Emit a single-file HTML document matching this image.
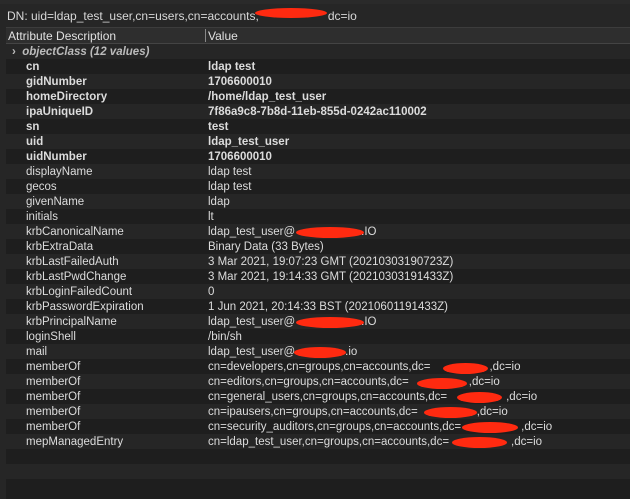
<!DOCTYPE html>
<html><head><style>
body{margin:0;width:630px;height:499px;background:#1e1e1e;font-family:"Liberation Sans",sans-serif;font-size:11.5px;color:#dcdcdc;position:relative;overflow:hidden}
.top{position:absolute;left:0;top:0;width:630px;height:4px;background:#2a2a2a}
.dn{position:absolute;left:0;top:4px;width:630px;height:23px;background:#262626;border-bottom:1px solid #3c3c3c}
.dn>span{position:absolute;left:7px;top:5px;font-size:12px;color:#d8d8d8;white-space:nowrap}
.hdr{position:absolute;left:6px;top:28px;width:624px;height:15px;background:#2e2e2e;border-bottom:1px solid #444}
.hdr span{position:absolute;top:1px;font-size:12px;color:#e0e0e0}
.rows{position:absolute;left:6px;top:44px;width:624px}
.r{height:15px;position:relative;white-space:nowrap}
.r:nth-child(odd){background:#262626}
.r:nth-child(even){background:#1e1e1e}
.a{position:absolute;left:20px;top:2px}
.v{position:absolute;left:202px;top:2px}
.b{font-weight:bold}
.t{display:inline-block}
.red{position:absolute;background:#ff2a10;border-radius:50%}
.lb{position:absolute;left:0;top:27px;width:6px;height:472px;background:#262626}
.sep{position:absolute;left:205px;top:29px;width:1px;height:13px;background:#888}
</style></head><body>
<div class="top"></div>
<div class="dn"><span>DN: uid=ldap_test_user,cn=users,cn=accounts,<span class="t" style="width:69px"></span>dc=io</span></div>
<div class="lb"></div>
<div class="hdr"><span style="left:2px">Attribute Description</span><span style="left:202px">Value</span></div>
<div class="sep"></div>
<div class="rows">
<div class="r"><span class="a b" style="left:6px;color:#bbb">›&nbsp; <i>objectClass (12 values)</i></span></div>
<div class="r"><span class="a b">cn</span><span class="v b">ldap test</span></div>
<div class="r"><span class="a b">gidNumber</span><span class="v b">1706600010</span></div>
<div class="r"><span class="a b">homeDirectory</span><span class="v b">/home/ldap_test_user</span></div>
<div class="r"><span class="a b">ipaUniqueID</span><span class="v b">7f86a9c8-7b8d-11eb-855d-0242ac110002</span></div>
<div class="r"><span class="a b">sn</span><span class="v b">test</span></div>
<div class="r"><span class="a b">uid</span><span class="v b">ldap_test_user</span></div>
<div class="r"><span class="a b">uidNumber</span><span class="v b">1706600010</span></div>
<div class="r"><span class="a">displayName</span><span class="v">ldap test</span></div>
<div class="r"><span class="a">gecos</span><span class="v">ldap test</span></div>
<div class="r"><span class="a">givenName</span><span class="v">ldap</span></div>
<div class="r"><span class="a">initials</span><span class="v">lt</span></div>
<div class="r"><span class="a">krbCanonicalName</span><span class="v">ldap_test_user@<span class="t" style="width:66px"></span>.IO</span></div>
<div class="r"><span class="a">krbExtraData</span><span class="v">Binary Data (33 Bytes)</span></div>
<div class="r"><span class="a">krbLastFailedAuth</span><span class="v">3 Mar 2021, 19:07:23 GMT (20210303190723Z)</span></div>
<div class="r"><span class="a">krbLastPwdChange</span><span class="v">3 Mar 2021, 19:14:33 GMT (20210303191433Z)</span></div>
<div class="r"><span class="a">krbLoginFailedCount</span><span class="v">0</span></div>
<div class="r"><span class="a">krbPasswordExpiration</span><span class="v">1 Jun 2021, 20:14:33 BST (20210601191433Z)</span></div>
<div class="r"><span class="a">krbPrincipalName</span><span class="v">ldap_test_user@<span class="t" style="width:66px"></span>.IO</span></div>
<div class="r"><span class="a">loginShell</span><span class="v">/bin/sh</span></div>
<div class="r"><span class="a">mail</span><span class="v">ldap_test_user@<span class="t" style="width:50px"></span>.io</span></div>
<div class="r"><span class="a">memberOf</span><span class="v">cn=developers,cn=groups,cn=accounts,dc=<span class="t" style="width:59px"></span>,dc=io</span></div>
<div class="r"><span class="a">memberOf</span><span class="v">cn=editors,cn=groups,cn=accounts,dc=<span class="t" style="width:60px"></span>,dc=io</span></div>
<div class="r"><span class="a">memberOf</span><span class="v">cn=general_users,cn=groups,cn=accounts,dc=<span class="t" style="width:59px"></span>,dc=io</span></div>
<div class="r"><span class="a">memberOf</span><span class="v">cn=ipausers,cn=groups,cn=accounts,dc=<span class="t" style="width:59px"></span>,dc=io</span></div>
<div class="r"><span class="a">memberOf</span><span class="v">cn=security_auditors,cn=groups,cn=accounts,dc=<span class="t" style="width:60px"></span>,dc=io</span></div>
<div class="r"><span class="a">mepManagedEntry</span><span class="v">cn=ldap_test_user,cn=groups,cn=accounts,dc=<span class="t" style="width:62px"></span>,dc=io</span></div>
<div class="r"></div><div class="r"></div><div class="r"></div>
</div>
<div class="red" style="left:255px;top:8px;width:72px;height:10px"></div>
<div class="red" style="left:296px;top:227px;width:68px;height:11px"></div>
<div class="red" style="left:296px;top:317px;width:68px;height:11px"></div>
<div class="red" style="left:294px;top:347px;width:52px;height:11px"></div>
<div class="red" style="left:443px;top:363px;width:45px;height:11px"></div>
<div class="red" style="left:417px;top:378px;width:50px;height:11px"></div>
<div class="red" style="left:457px;top:392px;width:45px;height:11px"></div>
<div class="red" style="left:424px;top:407px;width:53px;height:11px"></div>
<div class="red" style="left:462px;top:422px;width:56px;height:11px"></div>
<div class="red" style="left:452px;top:437px;width:55px;height:11px"></div>
</body></html>
